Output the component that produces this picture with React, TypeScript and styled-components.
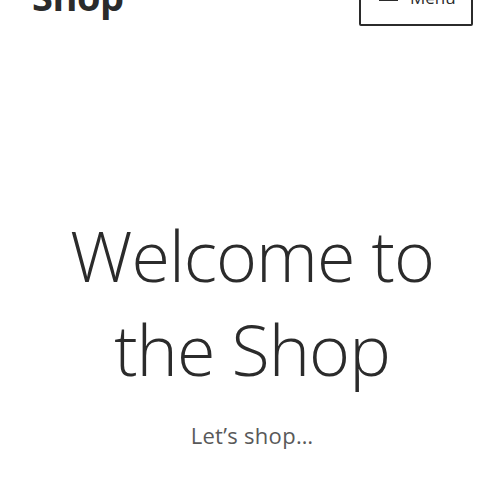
import React from 'react';
import styled, { createGlobalStyle } from 'styled-components';

const GlobalStyle = createGlobalStyle`
  html, body {
    margin: 0;
    padding: 0;
    background: #fff;
  }
  body {
    font-family: 'Open Sans', 'Noto Sans', sans-serif;
    color: #2b2b2b;
    overflow: hidden;
  }
`;

const App: React.FC = () => {
  return (
    <>
      <GlobalStyle />
      <Page>
        <Header>
          <SiteTitle>Shop</SiteTitle>
          <MenuButton>
            <Bars />
            Menu
          </MenuButton>
        </Header>
        <Hero>
          <Title>Welcome to the Shop</Title>
          <Subtitle>Let’s shop…</Subtitle>
        </Hero>
      </Page>
    </>
  );
};

export default App;

const Page = styled.div`
  margin-top: -26px;
  display: flex;
  flex-direction: column;
`;

const Header = styled.header`
  display: flex;
  justify-content: space-between;
  align-items: flex-start;
  padding: 0 31px 0 32px;
`;

const SiteTitle = styled.div`
  font-size: 38px;
  font-weight: 700;
  line-height: 1.2;
  letter-spacing: -0.5px;
  color: #2b2b2b;
`;

const MenuButton = styled.button`
  display: flex;
  align-items: center;
  justify-content: flex-start;
  gap: 12px;
  width: 114px;
  height: 52px;
  box-sizing: border-box;
  padding: 0 0 6px 18px;
  background: #fff;
  border: 2px solid #2b2b2b;
  border-radius: 2px;
  font-family: inherit;
  font-size: 17px;
  white-space: nowrap;
  color: #2b2b2b;
`;

const Bars = styled.span`
  display: block;
  flex-shrink: 0;
  width: 19px;
  height: 3px;
  margin-top: 4px;
  background: #2b2b2b;
  box-shadow: 0 -6px 0 #2b2b2b;
`;

const Hero = styled.section`
  display: flex;
  flex-direction: column;
  align-items: center;
  text-align: center;
  padding: 0 24px;
  margin-top: 182px;
`;

const Title = styled.h1`
  margin: 0;
  max-width: 400px;
  font-size: 70px;
  font-weight: 300;
  line-height: 94px;
  letter-spacing: -1px;
  color: #2b2b2b;
`;

const Subtitle = styled.p`
  margin: 24px 0 0;
  font-size: 22px;
  line-height: 30px;
  font-weight: 400;
  letter-spacing: 0.3px;
  color: #595959;
`;
